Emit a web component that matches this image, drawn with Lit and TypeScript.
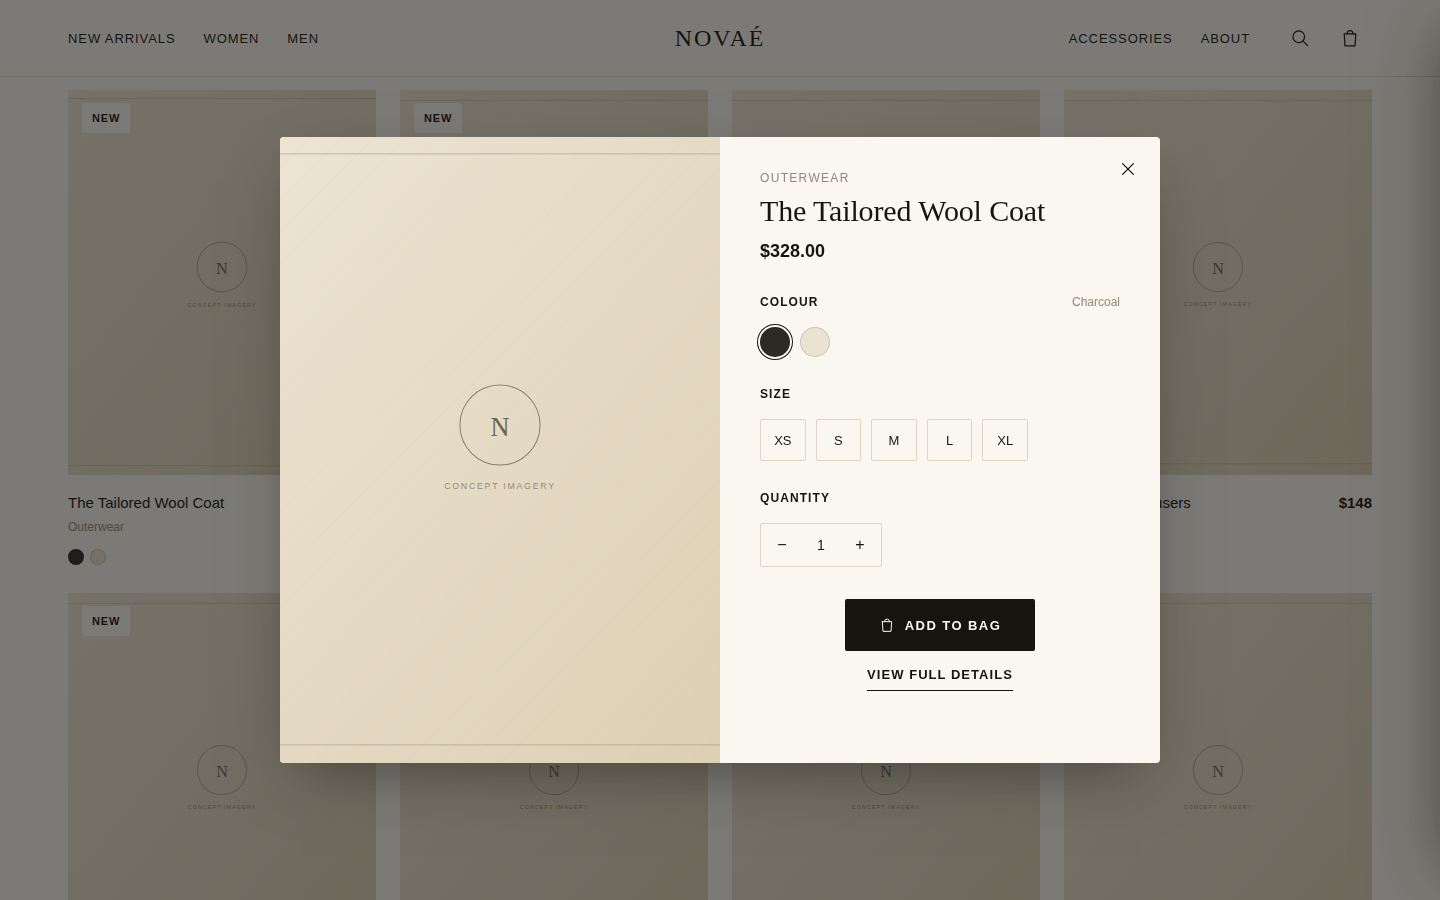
import { LitElement, html, css, svg } from "lit";
import { customElement, property, state } from "lit/decorators.js";
import { classMap } from "lit/directives/class-map.js";

const SANS = css`"Liberation Sans", Arial, Helvetica, sans-serif`;
const SERIF = css`"Liberation Serif", "Times New Roman", Georgia, serif`;

const bagIcon = (size: number, weight: number) => html`<svg width=${size} height=${size} viewBox="0 0 24 24" fill="none" stroke="currentColor" stroke-width=${weight} stroke-linecap="round" stroke-linejoin="round" aria-hidden="true">
  <path d="M5 7h14l-1 14.5H6L5 7z" /><path d="M8.5 7V6.5a3.5 3.5 0 0 1 7 0V7" />
</svg>`;

interface Product {
  name: string;
  category: string;
  price: string;
  isNew?: boolean;
  raised?: boolean;
  colours: string[];
}

const PRODUCTS: Product[] = [
  { name: "The Tailored Wool Coat", category: "Outerwear", price: "$328", isNew: true, raised: true, colours: ["charcoal", "cream"] },
  { name: "Silk Slip Dress", category: "Dresses", price: "$210", isNew: true, colours: ["cream", "charcoal"] },
  { name: "Cashmere Crew Knit", category: "Knitwear", price: "$185", colours: ["cream"] },
  { name: "Wide-Leg Trousers", category: "Bottoms", price: "$148", colours: ["charcoal"] },
  { name: "Linen Overshirt", category: "Shirts", price: "$132", isNew: true, colours: ["cream"] },
  { name: "Merino Turtleneck", category: "Knitwear", price: "$158", colours: ["charcoal"] },
  { name: "Leather Tote", category: "Accessories", price: "$265", colours: ["charcoal"] },
  { name: "Pleated Midi Skirt", category: "Bottoms", price: "$142", colours: ["cream"] },
];

@customElement("concept-art")
class ConceptArt extends LitElement {
  static styles = css`
    :host { display: block; overflow: hidden; }
    .art { display: block; width: 100%; height: 100%; }
    .initial { font-family: ${SERIF}; font-size: 21px; fill: #6b6552; }
    .caption { font-family: ${SANS}; font-size: 7px; letter-spacing: 0.2em; fill: #958c77; }
  `;
  render() {
    const lines = Array.from({ length: 40 }, (_, i) => i * 25);
    return html`<svg class="art" viewBox="0 0 400 500" preserveAspectRatio="xMidYMid slice" role="img" aria-label="Concept imagery">
      <defs>
        <linearGradient id="cloth" x1="0" y1="0" x2="1" y2="1">
          <stop offset="0" stop-color="#ede4d3" />
          <stop offset="1" stop-color="#dccfb4" />
        </linearGradient>
      </defs>
      <rect width="400" height="500" fill="url(#cloth)" />
      ${lines.map((n) => svg`<line x1=${n} y1="0" x2=${n - 500} y2="500" stroke="#8a8068" stroke-opacity="0.02" />`)}
      <path d="M0 13.5H400M0 485.5H400" stroke="#8a8068" stroke-opacity="0.35" />
      <circle cx="200" cy="230" r="32" fill="none" stroke="#8b8168" stroke-width="0.8" />
      <text class="initial" x="200" y="239" text-anchor="middle">N</text>
      <text class="caption" x="200" y="281" text-anchor="middle">CONCEPT IMAGERY</text>
    </svg>`;
  }
}

@customElement("product-card")
class ProductCard extends LitElement {
  @property({ attribute: false }) product!: Product;
  static styles = css`
    :host { display: block; color: #16140f; font-family: ${SANS}; }
    .media { position: relative; aspect-ratio: 4 / 5; overflow: hidden; }
    .picture { width: 100%; height: 100%; }
    .raised { transform: scale(1.01); }
    .badge { position: absolute; top: 13px; left: 14px; padding: 0 10px; border-radius: 2px; background: #faf7f0; font-size: 11px; font-weight: 700; line-height: 30px; letter-spacing: 0.08em; }
    .row { display: flex; justify-content: space-between; margin-top: 18px; font-size: 15px; line-height: 20px; }
    .name { margin: 0; font: inherit; }
    .price { font-weight: 700; }
    .category { margin: 6px 0 14px; color: #8f897b; font-size: 12px; line-height: 16px; }
    .colours { display: flex; gap: 6px; }
    .dot { box-sizing: border-box; width: 16px; height: 16px; border: 1px solid rgba(22, 20, 15, 0.15); border-radius: 50%; }
    .charcoal { background: #2d2a25; }
    .cream { background: #ebe3d2; }
  `;
  render() {
    const p = this.product;
    return html`
      <div class="media">
        <concept-art class=${classMap({ picture: true, raised: !!p.raised })}></concept-art>
        ${p.isNew ? html`<span class="badge">NEW</span>` : null}
      </div>
      <div class="row"><h3 class="name">${p.name}</h3><span class="price">${p.price}</span></div>
      <div class="category">${p.category}</div>
      <div class="colours">${p.colours.map((c) => html`<span class="dot ${c}"></span>`)}</div>
    `;
  }
}

@customElement("quick-view")
class QuickView extends LitElement {
  @state() private colour = "Charcoal";
  @state() private size = "";
  @state() private quantity = 1;
  static styles = css`
    :host { display: block; width: 880px; max-width: 100%; color: #16140f; font-family: ${SANS}; }
    .dialog { position: relative; display: grid; grid-template-columns: 1fr 1fr; overflow: hidden; border-radius: 4px; background: #faf7f0; }
    .visual { position: relative; }
    .picture { position: absolute; inset: 0; }
    .body { display: flex; flex-direction: column; padding: 32px 40px 72px; }
    button, input { margin: 0; padding: 0; border: 0; background: none; color: inherit; font: inherit; }
    button { cursor: pointer; }
    .close { position: absolute; top: 10px; right: 10px; display: grid; place-items: center; width: 44px; height: 44px; }
    .category { color: #8f897b; font-size: 12px; line-height: 18px; letter-spacing: 0.11em; }
    .title { margin: 6px 0 12px; font-family: ${SERIF}; font-size: 30px; font-weight: 400; line-height: 36px; letter-spacing: -0.005em; }
    .price { font-size: 18px; font-weight: 700; line-height: 20px; }
    .group { margin: 28px 0 0; }
    .first { margin-top: 32px; }
    .head { display: flex; justify-content: space-between; margin-bottom: 16px; font-size: 12px; line-height: 18px; }
    .label { font-weight: 700; letter-spacing: 0.09em; }
    .chosen { color: #8f897b; }
    .colours { display: flex; gap: 10px; }
    .swatch { box-sizing: border-box; width: 30px; height: 30px; border: 1px solid rgba(22, 20, 15, 0.15); border-radius: 50%; }
    .charcoal { background: #2d2a25; }
    .cream { background: #ebe3d2; }
    .selected { box-shadow: 0 0 0 2px #faf7f0, 0 0 0 3px #16140f; }
    .sizes { display: grid; grid-template-columns: repeat(5, 1fr); gap: 10px; max-width: 268px; }
    .size { box-sizing: border-box; height: 42px; border: 1px solid #ddd6c6; border-radius: 2px; font-size: 13px; }
    .picked { border-color: #16140f; }
    .stepper { display: inline-flex; align-items: stretch; height: 42px; border: 1px solid #ddd6c6; border-radius: 2px; }
    .step { width: 42px; font-size: 16px; }
    .count { width: 36px; text-align: center; font-size: 14px; }
    .actions { display: flex; flex-direction: column; align-items: center; gap: 16px; margin-top: 32px; font-size: 13px; font-weight: 700; }
    .add { display: flex; align-items: center; gap: 10px; height: 52px; padding: 0 34px; border-radius: 2px; background: #16140f; color: #faf7f0; letter-spacing: 0.11em; }
    .details { padding-bottom: 7px; border-bottom: 1px solid currentColor; color: inherit; line-height: 16px; letter-spacing: 0.08em; text-decoration: none; }
  `;
  render() {
    return html`
      <section class="dialog" role="dialog" aria-modal="true" aria-labelledby="title">
        <div class="visual"><concept-art class="picture"></concept-art></div>
        <div class="body">
          <div class="category">OUTERWEAR</div>
          <h2 class="title" id="title">The Tailored Wool Coat</h2>
          <div class="price">$328.00</div>
          <div class="group first" role="group" aria-labelledby="colour">
            <div class="head"><span class="label" id="colour">COLOUR</span><span class="chosen">${this.colour}</span></div>
            <div class="colours">
              ${["Charcoal", "Cream"].map((c) => html`<button type="button" aria-label=${c} aria-pressed=${c === this.colour}
                class=${classMap({ swatch: true, [c.toLowerCase()]: true, selected: c === this.colour })}
                @click=${() => (this.colour = c)}></button>`)}
            </div>
          </div>
          <div class="group" role="group" aria-labelledby="size">
            <div class="head"><span class="label" id="size">SIZE</span></div>
            <div class="sizes">
              ${["XS", "S", "M", "L", "XL"].map((s) => html`<button type="button" aria-pressed=${s === this.size}
                class=${classMap({ size: true, picked: s === this.size })} @click=${() => (this.size = s)}>${s}</button>`)}
            </div>
          </div>
          <div class="group">
            <div class="head"><label class="label" for="quantity">QUANTITY</label></div>
            <div class="stepper">
              <button class="step" type="button" aria-label="Decrease quantity" @click=${() => (this.quantity = Math.max(1, this.quantity - 1))}>−</button>
              <input class="count" id="quantity" inputmode="numeric" readonly .value=${String(this.quantity)} />
              <button class="step" type="button" aria-label="Increase quantity" @click=${() => this.quantity++}>+</button>
            </div>
          </div>
          <div class="actions">
            <button class="add" type="button">${bagIcon(16, 1.5)}<span>ADD TO BAG</span></button>
            <a class="details" href="#details">VIEW FULL DETAILS</a>
          </div>
        </div>
        <button class="close" type="button" aria-label="Close">
          <svg width="20" height="20" viewBox="0 0 24 24" fill="none" stroke="currentColor" stroke-width="1.5" stroke-linecap="round" aria-hidden="true"><path d="M5.5 5.5l13 13M18.5 5.5l-13 13" /></svg>
        </button>
      </section>
    `;
  }
}

@customElement("app-root")
class AppRoot extends LitElement {
  static styles = css`
    :host { display: block; color: #16140f; font-family: ${SANS}; }
    .page { height: 100vh; overflow: hidden; background: #faf7f0; }
    .header { display: grid; grid-template-columns: 1fr auto 1fr; align-items: center; box-sizing: border-box; height: 77px; padding: 0 max(48px, calc((100% - 1304px) / 2)); border-bottom: 1px solid #ddd6c6; }
    .nav { display: flex; align-items: center; gap: 28px; font-size: 13px; letter-spacing: 0.07em; }
    .end { justify-content: flex-end; }
    .link { color: inherit; text-decoration: none; }
    .brand { color: inherit; font-family: ${SERIF}; font-size: 24px; letter-spacing: 0.08em; text-decoration: none; }
    .tools { display: flex; gap: 6px; }
    .tool { display: grid; place-items: center; width: 44px; height: 44px; padding: 0; border: 0; background: none; color: inherit; }
    .grid { display: grid; grid-template-columns: repeat(4, 1fr); gap: 28px 24px; max-width: 1304px; margin: 0 auto; padding: 13px 48px 0; }
    .scrim { position: fixed; inset: 0; background: rgba(20, 20, 18, 0.55); }
    .layer { position: fixed; inset: 0; display: grid; place-items: center; }
    .modal { border-radius: 4px; box-shadow: 0 24px 60px -20px rgba(22, 20, 15, 0.5); }
    .drawer { position: fixed; top: 0; bottom: 0; left: 100%; width: 420px; background: #faf7f0; box-shadow: -20px 0 70px -30px rgba(22, 20, 15, 0.6); }
  `;
  render() {
    return html`
      <div class="page">
        <header class="header">
          <nav class="nav" aria-label="Shop">
            <a class="link" href="#new">NEW ARRIVALS</a><a class="link" href="#women">WOMEN</a><a class="link" href="#men">MEN</a>
          </nav>
          <a class="brand" href="#home">NOVAÉ</a>
          <nav class="nav end" aria-label="More">
            <a class="link" href="#accessories">ACCESSORIES</a><a class="link" href="#about">ABOUT</a>
            <div class="tools">
              <button class="tool" type="button" aria-label="Search">
                <svg width="20" height="20" viewBox="0 0 24 24" fill="none" stroke="currentColor" stroke-width="1.5" stroke-linecap="round" aria-hidden="true"><circle cx="10.5" cy="10.5" r="7" /><path d="M15.7 15.7L21 21" /></svg>
              </button>
              <button class="tool" type="button" aria-label="Bag">${bagIcon(20, 1.5)}</button>
            </div>
          </nav>
        </header>
        <main class="grid">${PRODUCTS.map((p) => html`<product-card .product=${p}></product-card>`)}</main>
      </div>
      <div class="scrim"></div>
      <div class="layer"><quick-view class="modal"></quick-view></div>
      <aside class="drawer" aria-hidden="true"></aside>
    `;
  }
}
